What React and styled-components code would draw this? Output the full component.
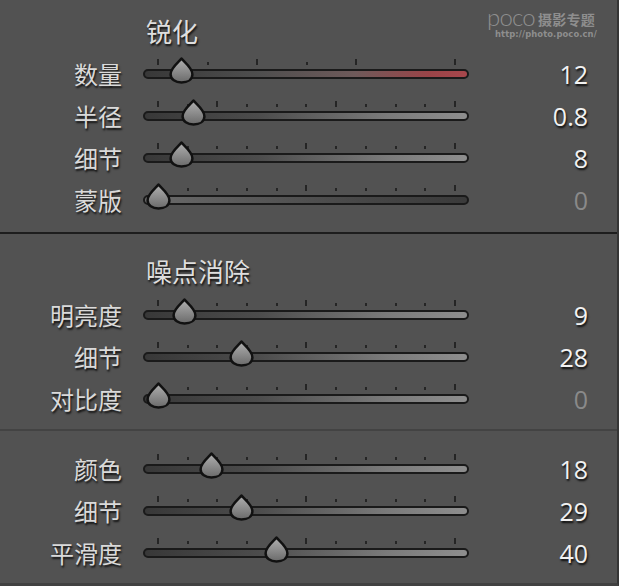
import React from 'react';
import styled, { createGlobalStyle } from 'styled-components';

const GlobalStyle = createGlobalStyle`
  html, body {
    margin: 0;
    padding: 0;
    background: #525252;
  }
`;

const Panel = styled.div`
  position: relative;
  width: 619px;
  height: 586px;
  box-sizing: border-box;
  background: #525252;
  border-right: 2px solid #353535;
  border-bottom: 3px solid #414141;
  overflow: hidden;
  font-family: 'Noto Sans CJK SC', 'Noto Sans', sans-serif;
`;

const Section = styled.div`
  padding-top: ${(p) => p.$pt || 0}px;
  padding-bottom: ${(p) => p.$pb || 0}px;
  border-bottom: ${(p) => p.$line || 'none'};
`;

const Title = styled.div`
  height: ${(p) => p.$h}px;
  box-sizing: border-box;
  padding-top: ${(p) => p.$pt}px;
  padding-left: 146px;
  display: flex;
  align-items: center;
  font-size: 26px;
  color: #dedede;
  text-shadow: 1px 2px 2px rgba(0, 0, 0, 0.8);
`;

const Row = styled.div`
  display: grid;
  grid-template-columns: 122px 326px 1fr;
  column-gap: 21px;
  align-items: center;
  height: 42px;
  padding-right: 29px;
`;

const Label = styled.div`
  text-align: right;
  font-size: 24px;
  line-height: 1;
  color: #dadada;
  text-shadow: 1px 2px 2px rgba(0, 0, 0, 0.8);
`;

const Value = styled.div`
  text-align: right;
  font-family: 'Open Sans', 'Noto Sans', sans-serif;
  font-size: 25px;
  line-height: 1;
  color: ${(p) => (p.$dim ? '#8a8a8a' : '#f2f2f2')};
  text-shadow: ${(p) =>
    p.$dim ? 'none' : '1px 2px 2px rgba(0, 0, 0, 0.85)'};
`;

const SliderCell = styled.div`
  height: 42px;
  box-sizing: border-box;
  padding-bottom: 11px;
  display: flex;
  flex-direction: column;
  justify-content: center;
`;

const Ticks = styled.div`
  height: 7px;
  margin: 0 13px 4px 14px;
  display: flex;
  justify-content: space-between;
  align-items: flex-end;
`;

const Tick = styled.span`
  width: 2px;
  height: ${(p) => (p.$major ? 6 : 3)}px;
  background: ${(p) => (p.$hide ? 'transparent' : '#252525')};
`;

const Track = styled.div`
  position: relative;
  height: 10px;
  box-sizing: border-box;
  border: 2px solid #1a1a1a;
  border-radius: 5px;
  background: ${(p) => p.$fill};
`;

const Thumb = styled.svg`
  position: absolute;
  top: -14px;
  width: 25px;
  height: 27px;
  overflow: visible;
`;

const Watermark = styled.div`
  position: absolute;
  top: 7px;
  left: 487px;
  display: flex;
  flex-direction: column;
  color: #8e8e8e;
`;

const Brand = styled.div`
  display: flex;
  align-items: flex-end;
  gap: 3px;
  height: 22px;
`;

const Poco = styled.span`
  display: inline-block;
  height: 22px;
  line-height: 20px;
  font-family: Lato, 'Open Sans', sans-serif;
  font-weight: 300;
  font-size: 24px;
  letter-spacing: -0.8px;
`;

const Topic = styled.span`
  display: inline-block;
  height: 18px;
  line-height: 17px;
  font-family: 'Noto Sans CJK SC', sans-serif;
  font-weight: 700;
  font-size: 14px;
  letter-spacing: 0.3px;
`;

const Url = styled.div`
  margin-left: 8px;
  height: 10px;
  line-height: 10px;
  font-family: 'DejaVu Sans', sans-serif;
  font-weight: 700;
  font-size: 8.4px;
  letter-spacing: 0.1px;
`;

const NORMAL = 'linear-gradient(90deg, #383838 0%, #4c4c4c 35%, #7a7a7a 75%, #8e8e8e 100%)';
const RED = 'linear-gradient(90deg, #383838 0%, #4e4e4e 35%, #6e5a5a 65%, #9a4448 88%, #a8474c 100%)';
const DARK = 'linear-gradient(90deg, #6a6a6a 0%, #5a5a5a 30%, #464646 70%, #3a3a3a 100%)';

const STD = ['M', 'm', 'm', 'm', 'm', 'M', 'm', 'm', 'm', 'm', 'M'];

const sections = [
  {
    title: '锐化',
    h: 53,
    tpt: 7,
    pb: 11,
    line: '2px solid #1d1d1d',
    rows: [
      { label: '数量', value: '12', frac: 12 / 150, fill: RED, ticks: ['M', 'm', 'M', 'm', 'M', 'x', 'M'] },
      { label: '半径', value: '0.8', frac: 0.3 / 2.5, fill: NORMAL, ticks: ['M', 'm', 'M', 'm', 'm', 'm', 'M', 'm', 'm', 'm', 'M'] },
      { label: '细节', value: '8', frac: 0.08, fill: NORMAL, ticks: STD },
      { label: '蒙版', value: '0', frac: 0, fill: DARK, ticks: STD, dim: true },
    ],
  },
  {
    title: '噪点消除',
    h: 60,
    tpt: 12,
    pb: 9,
    line: '2px solid #434343',
    rows: [
      { label: '明亮度', value: '9', frac: 0.09, fill: NORMAL, ticks: STD },
      { label: '细节', value: '28', frac: 0.28, fill: NORMAL, ticks: STD },
      { label: '对比度', value: '0', frac: 0, fill: NORMAL, ticks: STD, dim: true },
    ],
  },
  {
    pt: 17,
    rows: [
      { label: '颜色', value: '18', frac: 0.18, fill: NORMAL, ticks: STD },
      { label: '细节', value: '29', frac: 0.28, fill: NORMAL, ticks: STD },
      { label: '平滑度', value: '40', frac: 0.4, fill: NORMAL, ticks: STD },
    ],
  },
];

const ThumbIcon = ({ left, id }) => (
  <Thumb viewBox="0 0 24 26" style={{ left }}>
    <defs>
      <linearGradient id={id} x1="0" y1="0" x2="0" y2="1">
        <stop offset="0" stopColor="#b0b0b0" />
        <stop offset="0.55" stopColor="#8a8a8a" />
        <stop offset="1" stopColor="#6a6a6a" />
      </linearGradient>
    </defs>
    <path
      d="M12 1.5 C14.5 5 22.5 10.5 22.5 16.5 C22.5 21.8 17.8 24.5 12 24.5 C6.2 24.5 1.5 21.8 1.5 16.5 C1.5 10.5 9.5 5 12 1.5 Z"
      fill={`url(#${id})`}
      stroke="#111"
      strokeWidth="2.4"
      strokeLinejoin="round"
    />
  </Thumb>
);

const SliderRow = ({ row, id }) => (
  <Row>
    <Label>{row.label}</Label>
    <SliderCell>
      <Ticks>
        {row.ticks.map((t, i) => (
          <Tick key={i} $major={t === 'M'} $hide={t === 'x'} />
        ))}
      </Ticks>
      <Track $fill={row.fill}>
        <ThumbIcon id={id} left={13 + row.frac * 297 - 12.5} />
      </Track>
    </SliderCell>
    <Value $dim={row.dim}>{row.value}</Value>
  </Row>
);

export default function App() {
  return (
    <>
      <GlobalStyle />
      <Panel>
        {sections.map((s, si) => (
          <Section key={si} $pt={s.pt} $pb={s.pb} $line={s.line}>
            {s.title && (
              <Title $h={s.h} $pt={s.tpt}>
                {s.title}
              </Title>
            )}
            {s.rows.map((r, ri) => (
              <SliderRow key={ri} row={r} id={`thumb-${si}-${ri}`} />
            ))}
          </Section>
        ))}
        <Watermark>
          <Brand>
            <Poco>poco</Poco>
            <Topic>摄影专题</Topic>
          </Brand>
          <Url>http://photo.poco.cn/</Url>
        </Watermark>
      </Panel>
    </>
  );
}
